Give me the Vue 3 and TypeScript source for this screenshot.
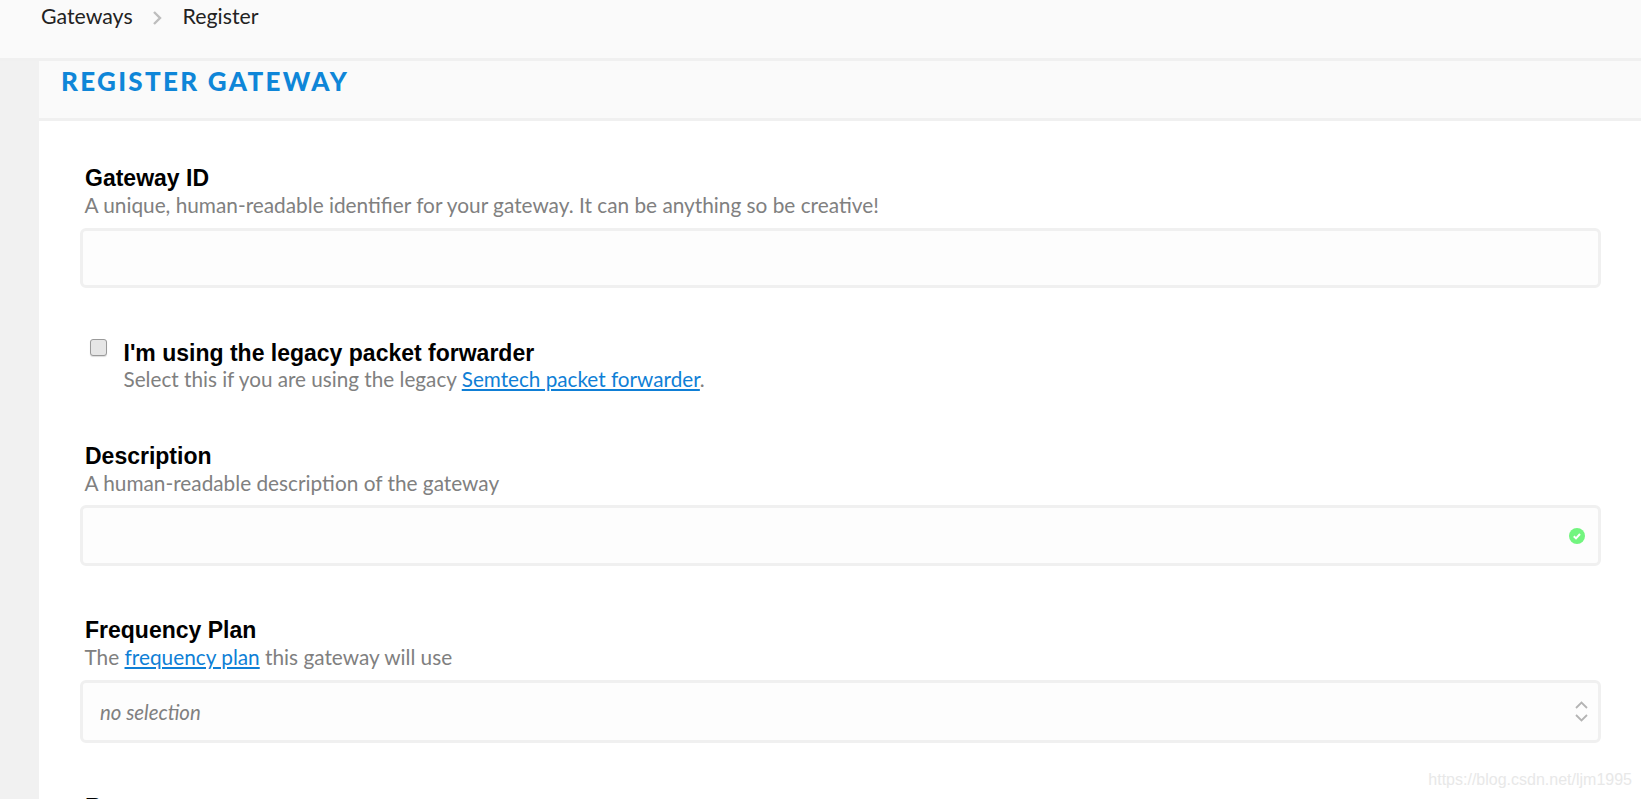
<script setup lang="ts">
const watermark: string = 'https://blog.csdn.net/ljm1995'
</script>

<template>
  <div class="page">
    <nav class="crumbs">
      <span>Gateways</span>
      <svg class="chev" width="10" height="16" viewBox="0 0 10 16"><path d="M2 2l6 6-6 6" fill="none" stroke="#bdbdbd" stroke-width="2.4" /></svg>
      <span>Register</span>
    </nav>
    <div class="body">
      <aside class="side"></aside>
      <main class="card">
        <header class="head"><h1>REGISTER GATEWAY</h1></header>
        <form class="form" @submit.prevent>
          <div class="field first">
            <label>Gateway ID</label>
            <p class="hint">A unique, human-readable identifier for your gateway. It can be anything so be creative!</p>
            <div class="input"></div>
          </div>
          <div class="check">
            <span class="box"></span>
            <div class="check-text">
              <label>I'm using the legacy packet forwarder</label>
              <p class="hint">Select this if you are using the legacy <a href="#">Semtech packet forwarder</a>.</p>
            </div>
          </div>
          <div class="field desc">
            <label>Description</label>
            <p class="hint">A human-readable description of the gateway</p>
            <div class="input">
              <svg class="ok" width="16" height="16" viewBox="0 0 16 16"><circle cx="8" cy="8" r="8" fill="#72f57f" /><path d="M4.8 8.2l2.2 2.2 4-4.4" fill="none" stroke="#fff" stroke-width="2" /></svg>
            </div>
          </div>
          <div class="field freq">
            <label>Frequency Plan</label>
            <p class="hint">The <a href="#">frequency plan</a> this gateway will use</p>
            <div class="input select">
              <em>no selection</em>
              <svg class="updown" width="13" height="21" viewBox="0 0 13 21"><path d="M1 7l5.5-5.5L12 7M1 14l5.5 5.5L12 14" fill="none" stroke="#b4b4b4" stroke-width="1.8" /></svg>
            </div>
          </div>
          <div class="field router"><label>Router</label></div>
        </form>
      </main>
    </div>
    <div class="mark">{{ watermark }}</div>
  </div>
</template>

<style scoped>
.page {
  position: relative;
  width: 1641px;
  height: 799px;
  overflow: hidden;
  background: #fff;
  font-family: Lato, "Liberation Sans", sans-serif;
}
.crumbs {
  box-sizing: border-box;
  height: 61px;
  padding: 3px 0 0 41px;
  display: flex;
  align-items: flex-start;
  background: #fafafa;
  border-bottom: 3px solid #f0f0f0;
  font-size: 21.3px;
  line-height: 26px;
  color: #222;
}
.chev { margin: 7px 21px 0 19px; }
.body { display: flex; height: 738px; }
.side { width: 39px; flex: none; background: #f1f1f1; }
.card { flex: 1; min-width: 0; }
.head {
  box-sizing: border-box;
  height: 60px;
  padding: 5px 0 0 22px;
  background: #fafafa;
  border-bottom: 3px solid #f0f0f0;
}
h1 {
  margin: 0;
  font-size: 26px;
  line-height: 30px;
  font-weight: 900;
  letter-spacing: 2.3px;
  color: #0f86d8;
}
.form { padding: 0 40px 0 41px; }
.field label, .check label {
  display: block;
  font-family: "Liberation Sans", Arial, sans-serif;
  font-weight: 700;
  font-size: 23px;
  line-height: 26px;
  color: #000;
}
.field label { padding-left: 5px; }
.hint {
  margin: 0;
  padding-left: 4.5px;
  font-size: 20.8px;
  line-height: 27px;
  color: #808080;
}
.hint a { color: #0f7fd6; text-decoration: underline; }
.input {
  box-sizing: border-box;
  position: relative;
  height: 60px;
  margin-top: 10px;
  display: flex;
  align-items: center;
  justify-content: flex-end;
  background: #fdfdfd;
  border: 3px solid #f0f0f0;
  border-radius: 6px;
}
.first { padding-top: 44px; }
.check {
  display: flex;
  margin-top: 51px;
  padding-left: 10px;
}
.check-text { padding-top: 1px; }
.check .hint { padding-left: 0; font-size: 20.7px; }
.box {
  box-sizing: border-box;
  flex: none;
  width: 17px;
  height: 17px;
  margin: 0 16.5px 0 0;
  background: #e6e6e6;
  border: 1.5px solid #9a9a9a;
  border-radius: 3px;
  box-shadow: 0 1px 1px #ddd;
}
.desc { padding-top: 50px; }
.desc .input { height: 61px; margin-top: 9px; padding-right: 13px; }
.freq { padding-top: 51px; }
.select { height: 63px; justify-content: space-between; padding: 0 10px 0 17px; }
.select em { font-size: 20.4px; color: #808080; }
.router { padding-top: 51px; }
.mark {
  position: absolute;
  right: 9px;
  top: 770px;
  font-family: "Liberation Sans", Arial, sans-serif;
  font-size: 16px;
  line-height: 20px;
  color: #e8e8e8;
}
</style>

<style>
html, body { margin: 0; overflow: hidden; }
</style>
